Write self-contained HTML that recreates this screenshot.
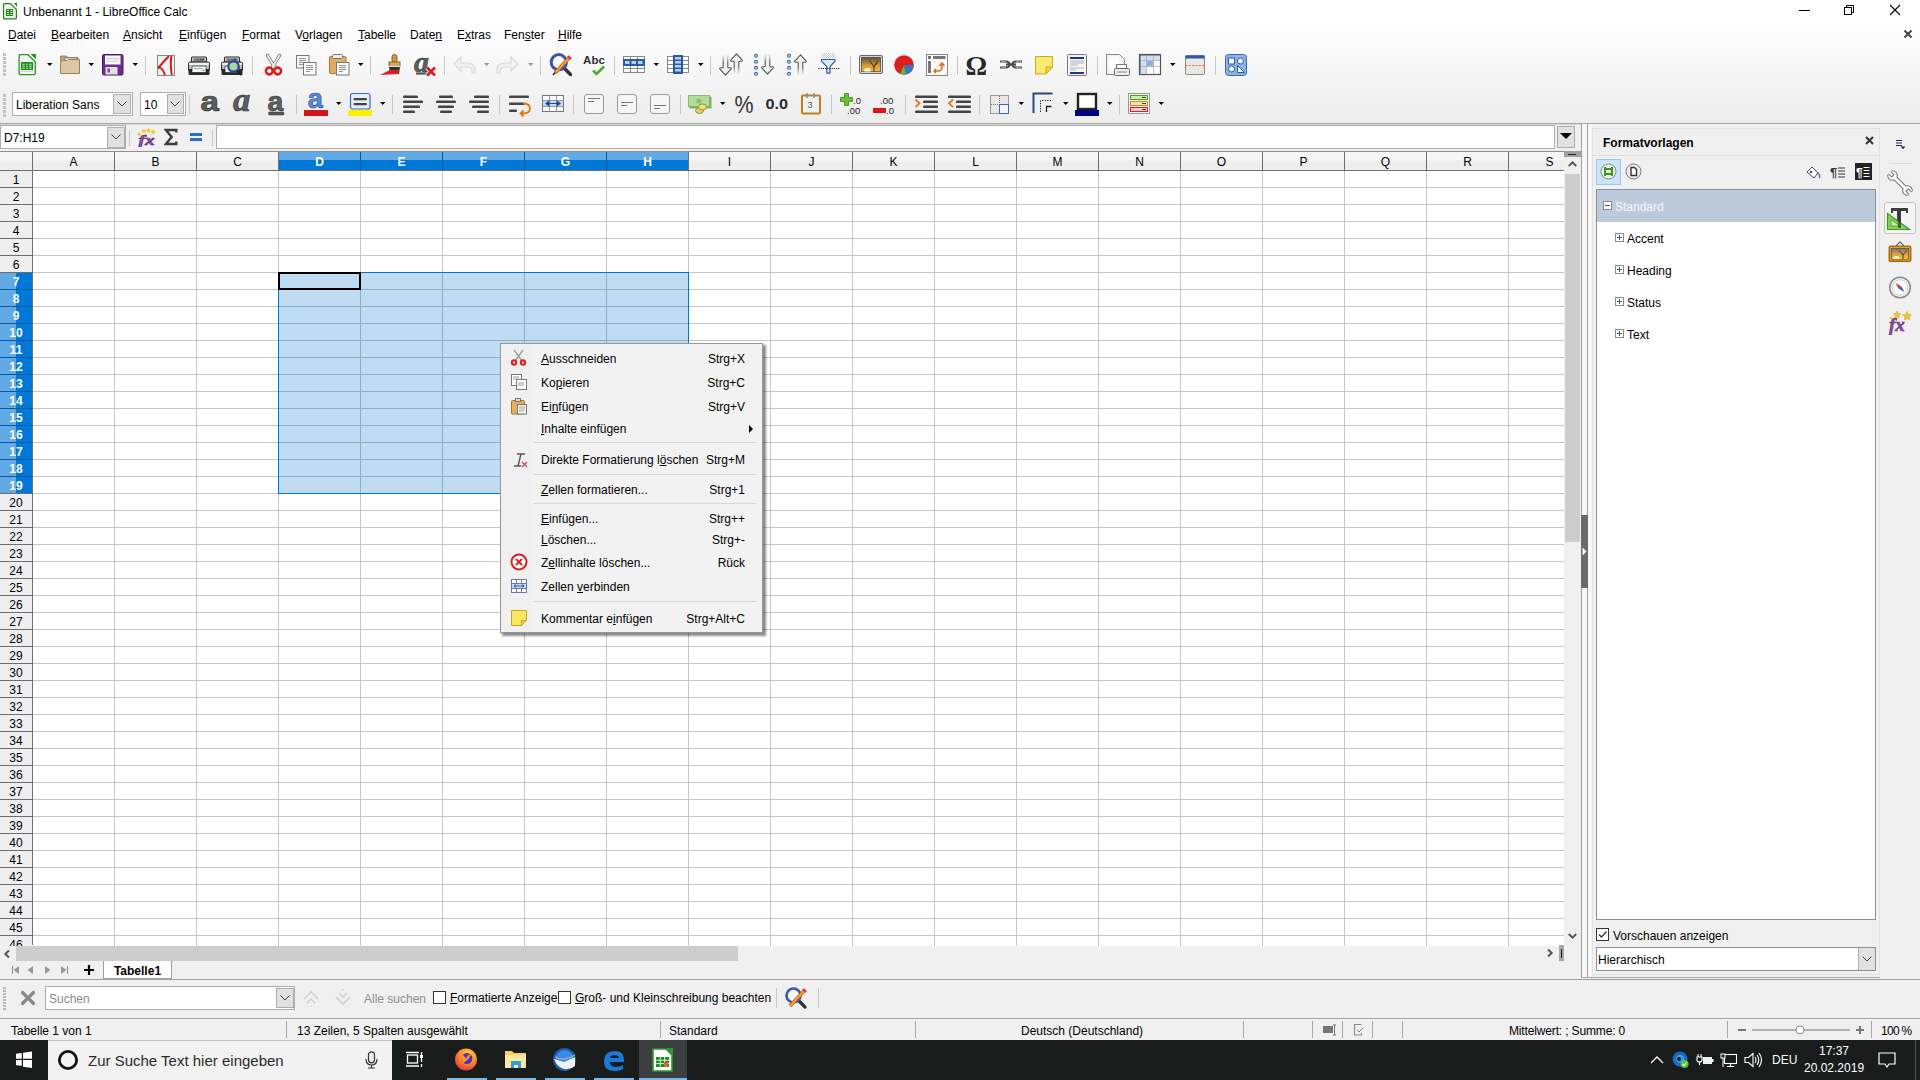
<!DOCTYPE html><html><head><meta charset="utf-8"><style>
html,body{margin:0;padding:0;}
body{width:1920px;height:1080px;overflow:hidden;position:relative;background:#f0f0f0;font-family:"Liberation Sans",sans-serif;color:#000;}
div{position:absolute;box-sizing:border-box;}
.t{white-space:nowrap;line-height:1;}
u{text-decoration:underline;text-underline-offset:1px;text-decoration-thickness:1px;}
</style></head><body>
<div style="left:0px;top:0px;width:1920px;height:23px;background:#fff"></div>
<div style="left:0px;top:23px;width:1920px;height:100px;background:linear-gradient(#fefefe,#ededed)"></div>
<div style="left:0px;top:123px;width:1920px;height:1px;background:#a9a9a9"></div>
<div style="left:0px;top:124px;width:1920px;height:1px;background:#d6d6d6"></div>
<svg style="position:absolute;left:0px;top:0px;" width="20" height="22" viewBox="0 0 20 22"><path d="M4.2 3.6h6.3l5.9 5.9v8.7l-.7.7h-11.5l-.7-.7v-13.9z" fill="#f2eef4" stroke="#1a8a10" stroke-width="1.2"/><path d="M14 3h3v4z" fill="#1a8a10"/><rect x="6" y="9" width="7" height="7" rx=".6" fill="#1a8a10"/><path d="M7 10.5h2M10.3 10.5h2M7 12.5h2M10.3 12.5h2M7 14.5h2M10.3 14.5h2" stroke="#e8f8e0" stroke-width=".9"/></svg>
<div class="t" style="left:23px;top:5.84px;font-size:12px;color:#000">Unbenannt 1 - LibreOffice Calc</div>
<div style="left:1799px;top:10px;width:11px;height:1px;background:#000"></div>
<svg style="position:absolute;left:1843px;top:4px;" width="12" height="12" viewBox="0 0 12 12"><rect x="1.5" y="3.5" width="7" height="7" fill="none" stroke="#000"/><path d="M3.5 3.5v-2h7v7h-2" fill="none" stroke="#000"/></svg>
<svg style="position:absolute;left:1889px;top:4px;" width="12" height="12" viewBox="0 0 12 12"><path d="M1 1L11 11M11 1L1 11" stroke="#000" stroke-width="1.1"/></svg>
<svg style="position:absolute;left:1903px;top:29px;" width="10" height="10" viewBox="0 0 10 10"><path d="M1.5 1.5L8.5 8.5M8.5 1.5L1.5 8.5" stroke="#444" stroke-width="2"/></svg>
<svg style="position:absolute;left:0;top:0" width="1920" height="125" viewBox="0 0 1920 125"><rect x="3" y="53" width="3" height="3" fill="#c3c3c3"/><rect x="3" y="57" width="3" height="3" fill="#c3c3c3"/><rect x="3" y="61" width="3" height="3" fill="#c3c3c3"/><rect x="3" y="65" width="3" height="3" fill="#c3c3c3"/><rect x="3" y="69" width="3" height="3" fill="#c3c3c3"/><rect x="3" y="73" width="3" height="3" fill="#c3c3c3"/><g transform="translate(18,54)"><path d="M1.6 .7h8.4l7.3 7.3v11.5l-1.2 1.2h-13.8l-1.2-1.2v-17.6z" fill="#f6f2f8" stroke="#259a1c" stroke-width="1.3"/><path d="M12.5 0h5.5v5.5z" fill="#259a1c"/><rect x="3" y="8" width="12" height="8" rx=".5" fill="#1a8a14"/><path d="M4.3 10.2h2.5M8 10.2h1.8M11 10.2h2.7M4.3 12.2h2.5M8 12.2h1.8M11 12.2h2.7M4.3 14.2h2.5M8 14.2h1.8M11 14.2h2.7" stroke="#e8f8e0" stroke-width=".9"/><path d="M3 17.5h12" stroke="#d0d0d0" stroke-width=".9"/></g><path d="M47 63h5.5l-2.75 3z" fill="#000"/><g transform="translate(60,55)"><path d="M0.5 3.5v-2.5h6l1.5 1.5h10v4h-17.5z" fill="#bfa37a" stroke="#9c8158"/><rect x="5" y="3" width="11.5" height="5" fill="#fff" stroke="#777" stroke-width=".8"/><path d="M0.5 18.5v-11l2-2h4.5l1-1h11.5v14z" fill="#dcc7a4" stroke="#9c8158"/></g><path d="M88.5 63h5.5l-2.75 3z" fill="#000"/><g transform="translate(102,54)"><rect x="0.5" y="0.5" width="20.5" height="20.5" rx="1.5" fill="#6e2c8c" stroke="#4a1a60"/><rect x="3" y="1.5" width="15.5" height="9" fill="#fafafa"/><path d="M4.5 4.5h12.5M4.5 7h12.5" stroke="#bbb" stroke-width=".8"/><rect x="3.5" y="13" width="12" height="7.5" fill="#e0e0e0"/><rect x="5.5" y="14.5" width="2.5" height="4" fill="#7a4a9a"/></g><path d="M132.5 63h5.5l-2.75 3z" fill="#000"/><rect x="145" y="56" width="1" height="19" fill="#c6c6c6"/><g transform="translate(157,55)"><rect x="0.5" y="0.5" width="17" height="20" fill="#f2f2f2" stroke="#888"/><path d="M12 1C7 6 4 10 1 13M1 13C4 12 6 14 8 20M14.5 1C13 8 14 15 14.8 20" fill="none" stroke="#d01c24" stroke-width="2"/></g><g transform="translate(188,57)"><path d="M3.5 1q0-1 1-1h13q1 0 1 1v4h-15z" fill="#d8d8d8" stroke="#2a2a2a" stroke-width="1.1"/><rect x="5.5" y="1.5" width="11" height="2.2" fill="#4a4a4a"/><path d="M6.5 2.6h1M8.5 2.6h1M10.5 2.6h1" stroke="#ccc" stroke-width=".8"/><path d="M0.6 7q0-2 2-2h16.8q2 0 2 2v6h-20.8z" fill="#c8c8c8" stroke="#2a2a2a" stroke-width="1.1"/><rect x="1" y="6" width="20" height="2" fill="#f0f0f0"/><rect x="0.5" y="12" width="21" height="6" rx="1" fill="#2a2a2a"/><rect x="4" y="9" width="14" height="6.5" fill="#f8f8f8" stroke="#222" stroke-width=".7"/><path d="M6 11l3 1.2l3-1.2l3 1.2" stroke="#7cba6a" fill="none"/><rect x="14.5" y="13" width="2" height="1" fill="#3a8ae0"/></g><g transform="translate(221,57)"><path d="M3.5 1q0-1 1-1h13q1 0 1 1v4h-15z" fill="#d8d8d8" stroke="#2a2a2a" stroke-width="1.1"/><rect x="5.5" y="1.5" width="11" height="2.2" fill="#4a4a4a"/><path d="M6.5 2.6h1M8.5 2.6h1M10.5 2.6h1" stroke="#ccc" stroke-width=".8"/><path d="M0.6 7q0-2 2-2h16.8q2 0 2 2v6h-20.8z" fill="#c8c8c8" stroke="#2a2a2a" stroke-width="1.1"/><rect x="1" y="6" width="20" height="2" fill="#f0f0f0"/><rect x="0.5" y="12" width="21" height="6" rx="1" fill="#2a2a2a"/><rect x="4" y="9" width="14" height="6.5" fill="#f8f8f8" stroke="#222" stroke-width=".7"/><circle cx="12.5" cy="9.5" r="5.2" fill="#a8d898" stroke="#2a44a8" stroke-width="2.2"/><path d="M16 13.5l4.5 4.5" stroke="#222" stroke-width="2.4"/></g><rect x="252" y="56" width="1" height="19" fill="#c6c6c6"/><g transform="translate(265,54)"><path d="M2.5 1.5L10 14M14.5 1.5L7 14" stroke="#6a6a6a" stroke-width="3.4" stroke-linecap="round"/><path d="M2.5 1.5L10 14M14.5 1.5L7 14" stroke="#f2f2f2" stroke-width="1.8" stroke-linecap="round"/><circle cx="4.3" cy="17" r="3.4" fill="#fff" stroke="#d81e1e" stroke-width="2.6"/><circle cx="12.7" cy="17" r="3.4" fill="#fff" stroke="#d81e1e" stroke-width="2.6"/></g><g transform="translate(296,55)"><rect x="0.5" y="0.5" width="12.5" height="12.5" fill="#fafafa" stroke="#777"/><path d="M3 3.5h7M3 5.5h7M3 7.5h7M3 9.5h4" stroke="#888" stroke-width=".9"/><rect x="7.5" y="7.5" width="12.5" height="12.5" fill="#fafafa" stroke="#777"/><path d="M10 10.5h7M10 12.5h7M10 14.5h7M10 16.5h4" stroke="#888" stroke-width=".9"/></g><g transform="translate(329,54)"><rect x="0.5" y="2.5" width="16.5" height="17" rx="1.5" fill="#e2ad62" stroke="#a8762a"/><rect x="3.5" y="0.5" width="10" height="4" rx="1" fill="#eee" stroke="#777"/><rect x="7.5" y="8.5" width="12.5" height="12.5" fill="#fafafa" stroke="#777"/><path d="M10 11.5h7M10 13.5h7M10 15.5h7M10 17.5h4" stroke="#888" stroke-width=".9"/></g><path d="M358 63h5.5l-2.75 3z" fill="#000"/><rect x="370" y="56" width="1" height="19" fill="#c6c6c6"/><g transform="translate(380,54)"><rect x="12" y="0.5" width="5" height="8" rx="2.5" fill="#c99a50" stroke="#8a6020"/><rect x="9" y="8" width="11" height="4" fill="#d9a858" stroke="#8a6020"/><rect x="9" y="11.5" width="11" height="1.5" fill="#ddd"/><path d="M9 13h11l-1 7h-9z" fill="#333"/><path d="M0 21l10-5h9l-1 4z" fill="#e02020"/></g><g transform="translate(415,56)"><text x="-1" y="15.5" font-family="Liberation Serif" font-style="italic" font-weight="bold" font-size="30" fill="#5a5f5f" stroke="#2e3232" stroke-width=".5">a</text><path d="M1 17.5h12" stroke="#505656" stroke-width="2.2"/><path d="M12 11.5l8 8M20 11.5l-8 8" stroke="#fff" stroke-width="4.5"/><path d="M12 11.5l8 8M20 11.5l-8 8" stroke="#e01818" stroke-width="2.6"/></g><rect x="444" y="56" width="1" height="19" fill="#c6c6c6"/><g transform="translate(453,56)"><path d="M8 1L1 8L8 15v-4h6q5 0 5 4v2h3v-3q0-7-8-7h-6z" fill="#f2f2f2" stroke="#dadada" stroke-width="1.2"/></g><path d="M484 63h5.5l-2.75 3z" fill="#999"/><g transform="translate(497,56)"><path d="M14 1L21 8L14 15v-4h-6q-5 0-5 4v2h-3v-3q0-7 8-7h6z" fill="#f2f2f2" stroke="#dadada" stroke-width="1.2"/></g><path d="M528 63h5.5l-2.75 3z" fill="#999"/><rect x="540" y="56" width="1" height="19" fill="#c6c6c6"/><g transform="translate(550,53)"><path d="M14 15l6.5 6.5" stroke="#333" stroke-width="3.4" stroke-linecap="round"/><circle cx="8.8" cy="9.2" r="7.6" fill="#fff" fill-opacity=".6" stroke="#3a54b0" stroke-width="3"/><path d="M5 20L19 5" stroke="#c06010" stroke-width="3.6"/><path d="M5 20L19 5" stroke="#f0a040" stroke-width="2"/><path d="M18 3l3 3" stroke="#e03030" stroke-width="2.4"/><path d="M3 22l2-2.5" stroke="#222" stroke-width="1.5"/></g><g transform="translate(583,55)"><text x="0" y="9" font-family="Liberation Sans" font-weight="bold" font-size="11.5" fill="#2e3436" textLength="22">Abc</text><path d="M10 15.5l3.5 3.5l7.5-7.5" fill="none" stroke="#4aae24" stroke-width="2.6"/></g><rect x="614" y="56" width="1" height="19" fill="#c6c6c6"/><g transform="translate(623,56)"><rect x="0.5" y="0.5" width="21" height="16" fill="#fff" stroke="#888"/><path d="M0.5 4.5h21M0.5 12.5h21M0.5 8.5h21M7.5 .5v16M14.5 .5v16" stroke="#888"/><rect x="0" y="3" width="22" height="7" fill="#2a5aa8"/><rect x="2" y="5" width="4.5" height="3" fill="#b8cff0"/><rect x="8.5" y="5" width="4.5" height="3" fill="#b8cff0"/><rect x="15" y="5" width="4.5" height="3" fill="#b8cff0"/></g><path d="M653.5 63h5.5l-2.75 3z" fill="#000"/><g transform="translate(667,55)"><rect x="0.5" y="1.5" width="21" height="16" fill="#fff" stroke="#888"/><path d="M0.5 5.5h21M0.5 9.5h21M0.5 13.5h21M7.5 1.5v16M14.5 1.5v16" stroke="#888"/><rect x="6" y="0" width="10" height="19" fill="#2a5aa8"/><rect x="8" y="2" width="6" height="2.5" fill="#b8cff0"/><rect x="8" y="6" width="6" height="2.5" fill="#b8cff0"/><rect x="8" y="10" width="6" height="2.5" fill="#b8cff0"/><rect x="8" y="14" width="6" height="2.5" fill="#b8cff0"/></g><path d="M698 63h5.5l-2.75 3z" fill="#000"/><rect x="710" y="56" width="1" height="19" fill="#c6c6c6"/><defs><linearGradient id="shd" x1="0" y1="0" x2="0" y2="1"><stop offset="0" stop-color="#666" stop-opacity="0"/><stop offset=".6" stop-color="#555"/></linearGradient><linearGradient id="shu" x1="0" y1="1" x2="0" y2="0"><stop offset="0" stop-color="#666" stop-opacity="0"/><stop offset=".6" stop-color="#555"/></linearGradient></defs><g transform="translate(719,55)"><rect x="4.2" y="0" width="4.6" height="14" fill="#f2f2f0"/><path d="M4.2 0v13M8.8 0v13" stroke="url(#shd)" stroke-width="1.1"/><path d="M4.2 12.8h-2.6q-1.6 0-.6 1.3l5.5 6.1l5.5-6.1q1-1.3-.6-1.3h-2.6" fill="#efefed" stroke="#555" stroke-width="1.1" stroke-linejoin="round"/></g><g transform="translate(730,54)"><rect x="4.2" y="6" width="4.6" height="14" fill="#f2f2f0"/><path d="M4.2 7v13M8.8 7v13" stroke="url(#shu)" stroke-width="1.1"/><path d="M4.2 7.2h-2.6q-1.6 0-.6-1.3l5.5-6.1l5.5 6.1q1 1.3-.6 1.3h-2.6" fill="#efefed" stroke="#555" stroke-width="1.1" stroke-linejoin="round"/></g><g transform="translate(754,54)"><circle cx="2" cy="1.8" r="1.45" fill="none" stroke="#3a6ab8" stroke-width="1.2"/><circle cx="2" cy="7.8" r="1.45" fill="none" stroke="#3a6ab8" stroke-width="1.2"/><circle cx="2" cy="13.8" r="1.45" fill="none" stroke="#3a6ab8" stroke-width="1.2"/><circle cx="2" cy="19.8" r="1.45" fill="none" stroke="#3a6ab8" stroke-width="1.2"/></g><g transform="translate(761,54)"><rect x="4.2" y="0" width="4.6" height="14" fill="#f2f2f0"/><path d="M4.2 0v13M8.8 0v13" stroke="url(#shd)" stroke-width="1.1"/><path d="M4.2 12.8h-2.6q-1.6 0-.6 1.3l5.5 6.1l5.5-6.1q1-1.3-.6-1.3h-2.6" fill="#efefed" stroke="#555" stroke-width="1.1" stroke-linejoin="round"/></g><g transform="translate(787,54)"><circle cx="2" cy="1.8" r="1.45" fill="none" stroke="#3a6ab8" stroke-width="1.2"/><circle cx="2" cy="7.8" r="1.45" fill="none" stroke="#3a6ab8" stroke-width="1.2"/><circle cx="2" cy="13.8" r="1.45" fill="none" stroke="#3a6ab8" stroke-width="1.2"/><circle cx="2" cy="19.8" r="1.45" fill="none" stroke="#3a6ab8" stroke-width="1.2"/></g><g transform="translate(794,55)"><rect x="4.2" y="6" width="4.6" height="14" fill="#f2f2f0"/><path d="M4.2 7v13M8.8 7v13" stroke="url(#shu)" stroke-width="1.1"/><path d="M4.2 7.2h-2.6q-1.6 0-.6-1.3l5.5-6.1l5.5 6.1q1 1.3-.6 1.3h-2.6" fill="#efefed" stroke="#555" stroke-width="1.1" stroke-linejoin="round"/></g><defs><pattern id="dith" width="2" height="2" patternUnits="userSpaceOnUse"><rect width="1" height="1" fill="#b8b8b8"/><rect x="1" y="1" width="1" height="1" fill="#c8c8c8"/></pattern></defs><g transform="translate(818,53)"><rect x="4" y="0" width="13" height="5.5" fill="url(#dith)" opacity=".8"/><path d="M3.5 6.5h13.5v1.6l-5 5.5v6.5h-3.2v-6.5l-5.3-5.5z" fill="#dfe9f6" stroke="#2a5aa8" stroke-width="1.2" stroke-linejoin="round"/><path d="M0.5 15.5h22" stroke="#111" stroke-dasharray="1.1 1.1"/></g><rect x="850" y="56" width="1" height="19" fill="#c6c6c6"/><defs><linearGradient id="sun" x1="0" y1="0" x2="0" y2="1"><stop offset="0" stop-color="#5a5448"/><stop offset=".55" stop-color="#d8962e"/><stop offset="1" stop-color="#f4b848"/></linearGradient></defs><defs><clipPath id="imgclip"><rect x="2.5" y="2.5" width="19" height="14"/></clipPath></defs><g transform="translate(859,55)"><rect x="0.6" y="0.6" width="22.8" height="17.8" rx="1.5" fill="#fafafa" stroke="#6a6a6a" stroke-width="1.2"/><rect x="2" y="2" width="20" height="15" fill="#555"/><g clip-path="url(#imgclip)"><rect x="2.5" y="2.5" width="19" height="14" fill="url(#sun)"/><circle cx="8.5" cy="16" r="3.2" fill="#fff8c0"/><path d="M15 17v-5l-3-4.5M15 12l2.5-4.5l1.5-2M12 7.5l-2-2M15.5 10l3-1.5" stroke="#2a2016" fill="none" stroke-width=".9"/></g></g><g transform="translate(894,55)"><circle cx="10" cy="10" r="9.8" fill="#e01c1c"/><path d="M10 10h9.8a9.8 9.8 0 0 1-8 9.6z" fill="#3a74c0"/><path d="M10 10l1.8 9.6a9.8 9.8 0 0 1-5.8-.8z" fill="#5ab83a"/></g><g transform="translate(926,54)"><rect x="0.5" y="0.5" width="21" height="21" fill="#fafafa" stroke="#888"/><rect x="2" y="2" width="3" height="3" fill="#777"/><rect x="7" y="2" width="12.5" height="3" fill="#777"/><rect x="2" y="7" width="3" height="12" fill="#777"/><path d="M8 17h4q4 0 4-4v-3M13.5 12l2.5-3l2.5 3M10 15l-2 2l2 2" fill="none" stroke="#e07010" stroke-width="1.6"/></g><rect x="957" y="56" width="1" height="19" fill="#c6c6c6"/><text x="965.5" y="75" font-family="Liberation Serif" font-weight="bold" font-size="27" fill="#262a2a">Ω</text><g transform="translate(1000,59)"><path d="M0 2.5h6q3 0 4 3q-1 3-4 3h-6" fill="none" stroke="#4a4a4a" stroke-width="2"/><path d="M22 2.5h-6q-3 0-4 3q1 3 4 3h6" fill="none" stroke="#4a4a4a" stroke-width="2"/><path d="M6 5.5h10" stroke="#4a4a4a" stroke-width="2.2"/><path d="M1 2.5h5M16 2.5h5M1 8.5h5M16 8.5h5" stroke="#aaa" stroke-width=".7"/></g><g transform="translate(1035,56)"><path d="M0.5 0.5h17v11l-6.5 6.5h-10.5z" fill="#f8ec70" stroke="#c8a818"/><path d="M11 17.5v-6.5h6.5" fill="#e8d848" stroke="#c8a818"/></g><g transform="translate(1067,54)"><rect x="0.5" y="0.5" width="19" height="21" rx="1" fill="#f6f6f6" stroke="#777"/><rect x="3" y="3" width="14" height="2" fill="#1a3a8a"/><path d="M3 7h14M3 9h14M3 11h8M3 14h14M3 16h6" stroke="#aaa" stroke-width=".9"/><rect x="3" y="18" width="14" height="2" fill="#1a3a8a"/></g><rect x="1097" y="56" width="1" height="19" fill="#c6c6c6"/><g transform="translate(1106,54)"><path d="M0.5 0.5h13l5 5v15h-18z" fill="#f4f4f4" stroke="#888"/><rect x="3" y="3" width="10" height="13" fill="#fff"/><rect x="10.5" y="10.5" width="10" height="4" fill="#fff" stroke="#777"/><rect x="8.5" y="14.5" width="15" height="7" rx="1" fill="#eee" stroke="#666"/><path d="M11 18h10" stroke="#888"/></g><g transform="translate(1139,54)"><rect x="0.5" y="0.5" width="21" height="20" fill="#fff" stroke="#555" stroke-width="1.2"/><path d="M1 1h20v5h-20zM1 6h6v14h-6z" fill="#cfe0f4"/><path d="M7.5 1v19M14.5 1v19M1 6.5h20M1 12.5h20" stroke="#aab" stroke-width=".8"/><rect x="8" y="7" width="6" height="5" fill="#8ab0e0"/><path d="M1 1h20M1 1v19" stroke="#555"/></g><path d="M1170 63h5.5l-2.75 3z" fill="#000"/><g transform="translate(1185,55)"><rect x="0.5" y="0.5" width="19" height="19" rx="1.5" fill="#e8e8e6" stroke="#888"/><rect x="0.5" y="0.5" width="19" height="3" fill="#2a5aa8"/><path d="M0.5 10.5h19" stroke="#f07010" stroke-width="1.2" stroke-dasharray="2 1.3"/></g><rect x="1215" y="56" width="1" height="19" fill="#c6c6c6"/><g transform="translate(1225,54)"><rect x="0.5" y="0.5" width="21" height="21" rx="3" fill="#8ab4e6" stroke="#3a6ab8"/><rect x="3.5" y="4" width="6" height="6" fill="#fff" stroke="#2a5aa8"/><circle cx="15.5" cy="7" r="3" fill="#fff" stroke="#2a5aa8"/><circle cx="6.5" cy="15" r="3" fill="#fff" stroke="#2a5aa8"/><path d="M12.5 11.5v7h7z" fill="#fff" stroke="#2a5aa8"/></g><rect x="3" y="94" width="3" height="3" fill="#c3c3c3"/><rect x="3" y="98" width="3" height="3" fill="#c3c3c3"/><rect x="3" y="102" width="3" height="3" fill="#c3c3c3"/><rect x="3" y="106" width="3" height="3" fill="#c3c3c3"/><rect x="3" y="110" width="3" height="3" fill="#c3c3c3"/><rect x="3" y="114" width="3" height="3" fill="#c3c3c3"/><rect x="189" y="95" width="1" height="19" fill="#c6c6c6"/><text transform="translate(200.5,111) scale(1.18,1)" font-family="Liberation Sans" font-weight="bold" font-size="28" fill="#5a5f5f" stroke="#2e3232" stroke-width=".7">a</text><text transform="translate(233,111) scale(1.05,1)" font-family="Liberation Serif" font-style="italic" font-weight="bold" font-size="33" fill="#5a5f5f" stroke="#2e3232" stroke-width=".6">a</text><text transform="translate(267.5,110.5) scale(1.05,1)" font-family="Liberation Sans" font-weight="bold" font-size="27" fill="#5a5f5f" stroke="#2e3232" stroke-width=".6">a</text><rect x="268.5" y="112" width="15.5" height="3" rx="1.2" fill="#555" stroke="#333" stroke-width=".5"/><rect x="296" y="95" width="1" height="19" fill="#c6c6c6"/><text transform="translate(307.8,107.6) scale(1.0,1)" font-family="Liberation Sans" font-weight="bold" font-size="27" fill="#5a8ad6" stroke="#2a54a8" stroke-width=".7">a</text><rect x="304" y="110" width="24" height="6" fill="#d0181c"/><path d="M336 102h5.5l-2.75 3z" fill="#000"/><g transform="translate(350,93)"><rect x="0.5" y="0.5" width="19.5" height="15.5" rx="2" fill="#e6eef8" stroke="#3a6ab8" stroke-width="1.2"/><rect x="3.5" y="5" width="13.5" height="2.2" rx="1" fill="#444"/><rect x="3.5" y="10" width="13.5" height="2.2" rx="1" fill="#444"/></g><rect x="348" y="110" width="24" height="6" fill="#fff000"/><path d="M380 102h5.5l-2.75 3z" fill="#000"/><rect x="392" y="95" width="1" height="19" fill="#c6c6c6"/><rect x="403" y="95.5" width="15" height="2.6" rx="1.2" fill="#444"/><rect x="403" y="100.5" width="20" height="2.6" rx="1.2" fill="#444"/><rect x="403" y="105.5" width="17" height="2.6" rx="1.2" fill="#444"/><rect x="403" y="110.5" width="12" height="2.6" rx="1.2" fill="#444"/><rect x="439" y="95.5" width="14" height="2.6" rx="1.2" fill="#444"/><rect x="436" y="100.5" width="20" height="2.6" rx="1.2" fill="#444"/><rect x="438" y="105.5" width="16" height="2.6" rx="1.2" fill="#444"/><rect x="440" y="110.5" width="12" height="2.6" rx="1.2" fill="#444"/><rect x="474" y="95.5" width="15" height="2.6" rx="1.2" fill="#444"/><rect x="469" y="100.5" width="20" height="2.6" rx="1.2" fill="#444"/><rect x="472" y="105.5" width="17" height="2.6" rx="1.2" fill="#444"/><rect x="477" y="110.5" width="12" height="2.6" rx="1.2" fill="#444"/><rect x="499" y="95" width="1" height="19" fill="#c6c6c6"/><rect x="509" y="95.5" width="20" height="2.6" rx="1.2" fill="#444"/><rect x="509" y="102.5" width="16" height="2.6" rx="1.2" fill="#444"/><rect x="509" y="109.5" width="8" height="2.6" rx="1.2" fill="#444"/><path d="M523 103.5q7 0 7 5q0 5-7 5h-2M523.5 110.5l-3 3l3 3" fill="none" stroke="#e07818" stroke-width="1.8"/><g transform="translate(542,95)"><rect x="0.5" y="0.5" width="21" height="16" fill="#fff" stroke="#777"/><path d="M.5 5.5h21M.5 11.5h21M7.5 .5v5M14.5 .5v5M7.5 11.5v5M14.5 11.5v5" stroke="#999"/><rect x="1" y="6" width="20" height="5" fill="#c8daf2"/><path d="M4 8.5h14M4 8.5l3-2.2v4.4zM18 8.5l-3-2.2v4.4z" fill="#1a4a9a" stroke="#1a4a9a" stroke-width="1.2"/></g><rect x="573" y="95" width="1" height="19" fill="#c6c6c6"/><g transform="translate(584,94)"><rect x="0.5" y="0.5" width="19" height="19" rx="2.5" fill="#f6f6f6" stroke="#999"/><path d="M4 4.5h12M4 7.5h6" stroke="#777" stroke-width="1"/></g><g transform="translate(617,94)"><rect x="0.5" y="0.5" width="19" height="19" rx="2.5" fill="#f6f6f6" stroke="#999"/><path d="M4 8.5h12M4 11.5h6" stroke="#777" stroke-width="1"/></g><g transform="translate(650,94)"><rect x="0.5" y="0.5" width="19" height="19" rx="2.5" fill="#f6f6f6" stroke="#999"/><path d="M4 11.5h12M4 14.5h6" stroke="#777" stroke-width="1"/></g><rect x="680" y="95" width="1" height="19" fill="#c6c6c6"/><g transform="translate(688,95)"><rect x="2" y="2" width="21" height="11" fill="#8ac070" stroke="#6aa050" stroke-width=".8"/><rect x="0.5" y="0.5" width="21" height="11" fill="#b2dc98" stroke="#7ab060" stroke-width=".8"/><circle cx="11" cy="6" r="2.5" fill="#8ac070"/><ellipse cx="11.5" cy="15.5" rx="4" ry="3" fill="#e0d070" stroke="#a09020"/><ellipse cx="14.5" cy="12" rx="4" ry="3" fill="#f0e080" stroke="#a09020"/></g><path d="M720 102h5.5l-2.75 3z" fill="#000"/><text transform="translate(734.5,112.8) scale(1.02,1.15)" font-family="Liberation Sans" font-size="21" fill="#333">%</text><text transform="translate(765.5,108.8) scale(1.05,1)" font-family="Liberation Sans" font-weight="bold" font-size="15.5" fill="#2a2a2a">0.0</text><g transform="translate(801,93)"><rect x="1" y="2.5" width="18" height="18" rx="1" fill="#f0f0f0" stroke="#c08020" stroke-width="2"/><path d="M6 0v5M13 0v5" stroke="#888" stroke-width="1.4"/><text x="6.5" y="14.5" font-family="Liberation Sans" font-size="9" fill="#555">3</text></g><rect x="831" y="95" width="1" height="19" fill="#c6c6c6"/><g transform="translate(840,93)"><path d="M4.5 0.5h4v4h4v4h-4v4h-4v-4h-4v-4h4z" fill="#6ac030" stroke="#3a8a10" stroke-width=".8"/></g><text x="853" y="103.5" font-family="Liberation Sans" font-size="9.5" fill="#222">.0</text><text x="847" y="114" font-family="Liberation Sans" font-size="9.5" fill="#222">.00</text><text x="880" y="103.5" font-family="Liberation Sans" font-size="9.5" fill="#222">.00</text><rect x="873" y="108" width="13" height="5" rx=".5" fill="#d81818"/><text x="886" y="114" font-family="Liberation Sans" font-size="9.5" fill="#222">.0</text><rect x="905" y="95" width="1" height="19" fill="#c6c6c6"/><rect x="915" y="95.5" width="23" height="2.6" rx="1.2" fill="#444"/><rect x="923" y="100.5" width="15" height="2.6" rx="1.2" fill="#444"/><rect x="923" y="105.5" width="15" height="2.6" rx="1.2" fill="#444"/><rect x="915" y="110.5" width="23" height="2.6" rx="1.2" fill="#444"/><path d="M915.5 99.5l4 3.8l-4 3.8" fill="none" stroke="#e07818" stroke-width="1.8"/><rect x="948" y="95.5" width="23" height="2.6" rx="1.2" fill="#444"/><rect x="956" y="100.5" width="15" height="2.6" rx="1.2" fill="#444"/><rect x="956" y="105.5" width="15" height="2.6" rx="1.2" fill="#444"/><rect x="948" y="110.5" width="23" height="2.6" rx="1.2" fill="#444"/><path d="M953 99.5l-4 3.8l4 3.8" fill="none" stroke="#e07818" stroke-width="1.8"/><rect x="979" y="95" width="1" height="19" fill="#c6c6c6"/><g transform="translate(990,95)"><rect x="0.5" y="0.5" width="18" height="18" fill="#e8e8e6" stroke="#999"/><path d="M9.5 1v8M1 9.5h8" stroke="#777" stroke-dasharray="1 1"/><rect x="9.5" y="9.5" width="9" height="9" fill="#f4f4f4" stroke="#3a6ab8"/></g><path d="M1018.5 102h5.5l-2.75 3z" fill="#000"/><g transform="translate(1032,92)"><path d="M1.5 21v-19.5h19" fill="none" stroke="#2a4a7a" stroke-width="2"/><path d="M8.5 20v-11.5h12" fill="none" stroke="#222" stroke-dasharray="1.3 1.3"/><path d="M14.5 20v-5.5h5" fill="none" stroke="#222" stroke-width="1.3"/></g><path d="M1063 102h5.5l-2.75 3z" fill="#000"/><g transform="translate(1075,93)"><rect x="3" y="1" width="18" height="15" fill="#fff" stroke="#222" stroke-width="2.4"/></g><rect x="1075" y="110" width="24" height="6" fill="#000080"/><path d="M1107 102h5.5l-2.75 3z" fill="#000"/><rect x="1119" y="95" width="1" height="19" fill="#c6c6c6"/><g transform="translate(1128,93)"><rect x="0.5" y="0.5" width="21" height="20" fill="#f6f6f6" stroke="#999"/><rect x="2.5" y="2.5" width="17" height="4" fill="#c8f0b0" stroke="#4aa020"/><rect x="2.5" y="8.5" width="17" height="4" fill="#fce0b8" stroke="#e08020"/><rect x="2.5" y="14.5" width="17" height="4" fill="#f8c8c8" stroke="#e02020"/><path d="M14 4.5h4M14 10.5h4M14 16.5h4" stroke="#444" stroke-width="1.2"/></g><path d="M1158.5 102h5.5l-2.75 3z" fill="#000"/></svg>
<div style="left:12px;top:92px;width:121px;height:24px;background:#fff;border:1px solid #adadad"></div>
<div style="left:113px;top:94px;width:18px;height:20px;background:#e1e1e1;border:1px solid #adadad"></div>
<svg style="position:absolute;left:116px;top:100px;" width="12" height="8" viewBox="0 0 12 8"><path d="M1.5 1.5L6 6L10.5 1.5" fill="none" stroke="#444" stroke-width="1"/></svg>
<div class="t" style="left:16px;top:98.84px;font-size:12px;">Liberation Sans</div>
<div style="left:140px;top:92px;width:46px;height:24px;background:#fff;border:1px solid #adadad"></div>
<div style="left:167px;top:94px;width:17px;height:20px;background:#e1e1e1;border:1px solid #adadad"></div>
<svg style="position:absolute;left:169px;top:100px;" width="12" height="8" viewBox="0 0 12 8"><path d="M1.5 1.5L6 6L10.5 1.5" fill="none" stroke="#444" stroke-width="1"/></svg>
<div class="t" style="left:144px;top:98.84px;font-size:12px;">10</div>
<div class="t" style="left:8px;top:28.84px;font-size:12px;"><u>D</u>atei</div>
<div class="t" style="left:51px;top:28.84px;font-size:12px;"><u>B</u>earbeiten</div>
<div class="t" style="left:123px;top:28.84px;font-size:12px;"><u>A</u>nsicht</div>
<div class="t" style="left:179px;top:28.84px;font-size:12px;"><u>E</u>infügen</div>
<div class="t" style="left:242px;top:28.84px;font-size:12px;"><u>F</u>ormat</div>
<div class="t" style="left:295px;top:28.84px;font-size:12px;">V<u>o</u>rlagen</div>
<div class="t" style="left:358px;top:28.84px;font-size:12px;"><u>T</u>abelle</div>
<div class="t" style="left:410px;top:28.84px;font-size:12px;">Date<u>n</u></div>
<div class="t" style="left:457px;top:28.84px;font-size:12px;">E<u>x</u>tras</div>
<div class="t" style="left:504px;top:28.84px;font-size:12px;">Fen<u>s</u>ter</div>
<div class="t" style="left:558px;top:28.84px;font-size:12px;"><u>H</u>ilfe</div>
<div style="left:0px;top:125px;width:126px;height:24px;background:#fff;border:1px solid #adadad"></div>
<div style="left:107px;top:127px;width:18px;height:21px;background:#e1e1e1;border:1px solid #adadad"></div>
<svg style="position:absolute;left:110px;top:133px;" width="12" height="8" viewBox="0 0 12 8"><path d="M1.5 1.5L6 6L10.5 1.5" fill="none" stroke="#444" stroke-width="1"/></svg>
<div class="t" style="left:4px;top:131.84px;font-size:12px;">D7:H19</div>
<div style="left:129px;top:130px;width:1px;height:16px;background:#c8c8c8"></div>
<div style="left:212px;top:130px;width:1px;height:16px;background:#c8c8c8"></div>
<svg style="position:absolute;left:136px;top:127px;" width="20" height="20" viewBox="0 0 20 20"><text transform="translate(2.5,17.6) scale(1.2,0.88)" font-family="Liberation Serif" font-style="italic" font-weight="bold" font-size="16" fill="#9a5ab0" stroke="#5a2a70" stroke-width=".7">fx</text><path transform="translate(3.2,7.2) scale(2.4)" d="M0-1l.29.6l.66.09l-.48.46l.12.65l-.59-.31l-.59.31l.12-.65l-.48-.46l.66-.09z" fill="#f0c828"/><path transform="translate(8,4) scale(2.8)" d="M0-1l.29.6l.66.09l-.48.46l.12.65l-.59-.31l-.59.31l.12-.65l-.48-.46l.66-.09z" fill="#f0c828"/><path transform="translate(12.5,3.6) scale(2.8)" d="M0-1l.29.6l.66.09l-.48.46l.12.65l-.59-.31l-.59.31l.12-.65l-.48-.46l.66-.09z" fill="#f0c828"/><path transform="translate(17,5) scale(3)" d="M0-1l.29.6l.66.09l-.48.46l.12.65l-.59-.31l-.59.31l.12-.65l-.48-.46l.66-.09z" fill="#f0c828"/></svg>
<svg style="position:absolute;left:164px;top:128px;" width="15" height="19" viewBox="0 0 15 19"><path d="M12.3 4.5V2H2l5.6 7L2 16h10.3v-2.5" fill="none" stroke="#3a3e3e" stroke-width="2.4" stroke-linejoin="miter" stroke-miterlimit="3"/></svg>
<div style="left:190px;top:133px;width:12px;height:3px;background:#2c6fbf"></div>
<div style="left:190px;top:138px;width:12px;height:3px;background:#2c6fbf"></div>
<div style="left:216px;top:125px;width:1339px;height:24px;background:#fff;border:1px solid #adadad"></div>
<div style="left:1557px;top:126px;width:18px;height:22px;background:#e1e1e1;border:1px solid #adadad"></div>
<svg style="position:absolute;left:1559px;top:132px;" width="14" height="8" viewBox="0 0 14 8"><path d="M1 1h12L7 7z" fill="#000"/></svg>
<div style="left:0px;top:151px;width:1564px;height:794px;background:#fff"></div>
<div style="left:0px;top:152px;width:1564px;height:18px;background:linear-gradient(#f7f7f7,#f7f7f7 40%,#ececec 60%,#ececec)"></div>
<div style="left:0px;top:170px;width:32px;height:775px;background:#f0f0f0"></div>
<div style="left:0px;top:151px;width:1564px;height:1px;background:#a8a8a8"></div>
<div style="left:33px;top:171px;width:1531px;height:775px;background-color:#fff;background-image:linear-gradient(to right,#c6c6c6 1px,transparent 1px),linear-gradient(#c6c6c6 1px,transparent 1px);background-size:82px 17px;background-position:81px 16px"></div>
<div style="left:279px;top:273px;width:409px;height:220px;background-color:#bfdcf3;background-image:linear-gradient(to right,#8eadc8 1px,transparent 1px),linear-gradient(#8eadc8 1px,transparent 1px);background-size:82px 17px;background-position:81px 16px"></div>
<div style="left:278px;top:272px;width:411px;height:222px;border:1px solid #0078d7"></div>
<div style="left:278px;top:272px;width:83px;height:18px;border:2px solid #000"></div>
<div style="left:0px;top:152px;width:1564px;height:18px;background:linear-gradient(#f6f6f6 0,#f6f6f6 8px,#eeeeee 9px,#eeeeee)"></div>
<div style="left:32px;top:152px;width:656px;height:0px;"></div>
<div style="left:279px;top:152px;width:409px;height:18px;background:linear-gradient(#62aae5 0,#62aae5 8px,#0078d7 8px,#0078d7)"></div>
<div style="left:0px;top:151px;width:1564px;height:1px;background:#8f8f8f"></div>
<div style="left:0px;top:170px;width:1564px;height:1px;background:#6f6f6f"></div>
<div style="left:32px;top:152px;width:1px;height:18px;background:#6f6f6f"></div>
<div class="t" style="left:33px;top:155.84px;font-size:12px;width:81px;text-align:center;color:#000">A</div>
<div style="left:114px;top:152px;width:1px;height:18px;background:#6f6f6f"></div>
<div class="t" style="left:115px;top:155.84px;font-size:12px;width:81px;text-align:center;color:#000">B</div>
<div style="left:196px;top:152px;width:1px;height:18px;background:#6f6f6f"></div>
<div class="t" style="left:197px;top:155.84px;font-size:12px;width:81px;text-align:center;color:#000">C</div>
<div style="left:278px;top:152px;width:1px;height:18px;background:#6f6f6f"></div>
<div class="t" style="left:279px;top:155.84px;font-size:12px;width:81px;text-align:center;color:#fff;font-weight:bold">D</div>
<div style="left:360px;top:152px;width:1px;height:18px;background:#005a9e"></div>
<div class="t" style="left:361px;top:155.84px;font-size:12px;width:81px;text-align:center;color:#fff;font-weight:bold">E</div>
<div style="left:442px;top:152px;width:1px;height:18px;background:#005a9e"></div>
<div class="t" style="left:443px;top:155.84px;font-size:12px;width:81px;text-align:center;color:#fff;font-weight:bold">F</div>
<div style="left:524px;top:152px;width:1px;height:18px;background:#005a9e"></div>
<div class="t" style="left:525px;top:155.84px;font-size:12px;width:81px;text-align:center;color:#fff;font-weight:bold">G</div>
<div style="left:606px;top:152px;width:1px;height:18px;background:#005a9e"></div>
<div class="t" style="left:607px;top:155.84px;font-size:12px;width:81px;text-align:center;color:#fff;font-weight:bold">H</div>
<div style="left:688px;top:152px;width:1px;height:18px;background:#6f6f6f"></div>
<div class="t" style="left:689px;top:155.84px;font-size:12px;width:81px;text-align:center;color:#000">I</div>
<div style="left:770px;top:152px;width:1px;height:18px;background:#6f6f6f"></div>
<div class="t" style="left:771px;top:155.84px;font-size:12px;width:81px;text-align:center;color:#000">J</div>
<div style="left:852px;top:152px;width:1px;height:18px;background:#6f6f6f"></div>
<div class="t" style="left:853px;top:155.84px;font-size:12px;width:81px;text-align:center;color:#000">K</div>
<div style="left:934px;top:152px;width:1px;height:18px;background:#6f6f6f"></div>
<div class="t" style="left:935px;top:155.84px;font-size:12px;width:81px;text-align:center;color:#000">L</div>
<div style="left:1016px;top:152px;width:1px;height:18px;background:#6f6f6f"></div>
<div class="t" style="left:1017px;top:155.84px;font-size:12px;width:81px;text-align:center;color:#000">M</div>
<div style="left:1098px;top:152px;width:1px;height:18px;background:#6f6f6f"></div>
<div class="t" style="left:1099px;top:155.84px;font-size:12px;width:81px;text-align:center;color:#000">N</div>
<div style="left:1180px;top:152px;width:1px;height:18px;background:#6f6f6f"></div>
<div class="t" style="left:1181px;top:155.84px;font-size:12px;width:81px;text-align:center;color:#000">O</div>
<div style="left:1262px;top:152px;width:1px;height:18px;background:#6f6f6f"></div>
<div class="t" style="left:1263px;top:155.84px;font-size:12px;width:81px;text-align:center;color:#000">P</div>
<div style="left:1344px;top:152px;width:1px;height:18px;background:#6f6f6f"></div>
<div class="t" style="left:1345px;top:155.84px;font-size:12px;width:81px;text-align:center;color:#000">Q</div>
<div style="left:1426px;top:152px;width:1px;height:18px;background:#6f6f6f"></div>
<div class="t" style="left:1427px;top:155.84px;font-size:12px;width:81px;text-align:center;color:#000">R</div>
<div style="left:1508px;top:152px;width:1px;height:18px;background:#6f6f6f"></div>
<div class="t" style="left:1509px;top:155.84px;font-size:12px;width:81px;text-align:center;color:#000">S</div>
<div style="left:1564px;top:151px;width:1px;height:20px;background:#6f6f6f"></div>
<div style="left:0px;top:152px;width:32px;height:18px;background:linear-gradient(#f6f6f6 0,#f6f6f6 8px,#eeeeee 9px,#eeeeee)"></div>
<div style="left:32px;top:152px;width:1px;height:19px;background:#6f6f6f"></div>
<div style="left:0px;top:171px;width:32px;height:775px;background:#efefef"></div>
<div style="left:0px;top:273px;width:32px;height:220px;background:linear-gradient(to right,#62aae5 0,#62aae5 16px,#0078d7 16px,#0078d7)"></div>
<div style="left:32px;top:272px;width:1px;height:222px;background:#0064c0"></div>
<div style="left:32px;top:170px;width:1px;height:775px;background:#6f6f6f"></div>
<div style="left:0px;top:187px;width:32px;height:1px;background:#6f6f6f"></div>
<div class="t" style="left:0px;top:173.84px;font-size:12px;width:32px;text-align:center;color:#000">1</div>
<div style="left:0px;top:204px;width:32px;height:1px;background:#6f6f6f"></div>
<div class="t" style="left:0px;top:190.84px;font-size:12px;width:32px;text-align:center;color:#000">2</div>
<div style="left:0px;top:221px;width:32px;height:1px;background:#6f6f6f"></div>
<div class="t" style="left:0px;top:207.84px;font-size:12px;width:32px;text-align:center;color:#000">3</div>
<div style="left:0px;top:238px;width:32px;height:1px;background:#6f6f6f"></div>
<div class="t" style="left:0px;top:224.84px;font-size:12px;width:32px;text-align:center;color:#000">4</div>
<div style="left:0px;top:255px;width:32px;height:1px;background:#6f6f6f"></div>
<div class="t" style="left:0px;top:241.84px;font-size:12px;width:32px;text-align:center;color:#000">5</div>
<div style="left:0px;top:272px;width:32px;height:1px;background:#6f6f6f"></div>
<div class="t" style="left:0px;top:258.84px;font-size:12px;width:32px;text-align:center;color:#000">6</div>
<div style="left:0px;top:289px;width:32px;height:1px;background:#005a9e"></div>
<div class="t" style="left:0px;top:275.84px;font-size:12px;width:32px;text-align:center;color:#fff;font-weight:bold">7</div>
<div style="left:0px;top:306px;width:32px;height:1px;background:#005a9e"></div>
<div class="t" style="left:0px;top:292.84px;font-size:12px;width:32px;text-align:center;color:#fff;font-weight:bold">8</div>
<div style="left:0px;top:323px;width:32px;height:1px;background:#005a9e"></div>
<div class="t" style="left:0px;top:309.84px;font-size:12px;width:32px;text-align:center;color:#fff;font-weight:bold">9</div>
<div style="left:0px;top:340px;width:32px;height:1px;background:#005a9e"></div>
<div class="t" style="left:0px;top:326.84px;font-size:12px;width:32px;text-align:center;color:#fff;font-weight:bold">10</div>
<div style="left:0px;top:357px;width:32px;height:1px;background:#005a9e"></div>
<div class="t" style="left:0px;top:343.84px;font-size:12px;width:32px;text-align:center;color:#fff;font-weight:bold">11</div>
<div style="left:0px;top:374px;width:32px;height:1px;background:#005a9e"></div>
<div class="t" style="left:0px;top:360.84px;font-size:12px;width:32px;text-align:center;color:#fff;font-weight:bold">12</div>
<div style="left:0px;top:391px;width:32px;height:1px;background:#005a9e"></div>
<div class="t" style="left:0px;top:377.84px;font-size:12px;width:32px;text-align:center;color:#fff;font-weight:bold">13</div>
<div style="left:0px;top:408px;width:32px;height:1px;background:#005a9e"></div>
<div class="t" style="left:0px;top:394.84px;font-size:12px;width:32px;text-align:center;color:#fff;font-weight:bold">14</div>
<div style="left:0px;top:425px;width:32px;height:1px;background:#005a9e"></div>
<div class="t" style="left:0px;top:411.84px;font-size:12px;width:32px;text-align:center;color:#fff;font-weight:bold">15</div>
<div style="left:0px;top:442px;width:32px;height:1px;background:#005a9e"></div>
<div class="t" style="left:0px;top:428.84px;font-size:12px;width:32px;text-align:center;color:#fff;font-weight:bold">16</div>
<div style="left:0px;top:459px;width:32px;height:1px;background:#005a9e"></div>
<div class="t" style="left:0px;top:445.84px;font-size:12px;width:32px;text-align:center;color:#fff;font-weight:bold">17</div>
<div style="left:0px;top:476px;width:32px;height:1px;background:#005a9e"></div>
<div class="t" style="left:0px;top:462.84px;font-size:12px;width:32px;text-align:center;color:#fff;font-weight:bold">18</div>
<div style="left:0px;top:493px;width:32px;height:1px;background:#6f6f6f"></div>
<div class="t" style="left:0px;top:479.84px;font-size:12px;width:32px;text-align:center;color:#fff;font-weight:bold">19</div>
<div style="left:0px;top:510px;width:32px;height:1px;background:#6f6f6f"></div>
<div class="t" style="left:0px;top:496.84px;font-size:12px;width:32px;text-align:center;color:#000">20</div>
<div style="left:0px;top:527px;width:32px;height:1px;background:#6f6f6f"></div>
<div class="t" style="left:0px;top:513.84px;font-size:12px;width:32px;text-align:center;color:#000">21</div>
<div style="left:0px;top:544px;width:32px;height:1px;background:#6f6f6f"></div>
<div class="t" style="left:0px;top:530.84px;font-size:12px;width:32px;text-align:center;color:#000">22</div>
<div style="left:0px;top:561px;width:32px;height:1px;background:#6f6f6f"></div>
<div class="t" style="left:0px;top:547.84px;font-size:12px;width:32px;text-align:center;color:#000">23</div>
<div style="left:0px;top:578px;width:32px;height:1px;background:#6f6f6f"></div>
<div class="t" style="left:0px;top:564.84px;font-size:12px;width:32px;text-align:center;color:#000">24</div>
<div style="left:0px;top:595px;width:32px;height:1px;background:#6f6f6f"></div>
<div class="t" style="left:0px;top:581.84px;font-size:12px;width:32px;text-align:center;color:#000">25</div>
<div style="left:0px;top:612px;width:32px;height:1px;background:#6f6f6f"></div>
<div class="t" style="left:0px;top:598.84px;font-size:12px;width:32px;text-align:center;color:#000">26</div>
<div style="left:0px;top:629px;width:32px;height:1px;background:#6f6f6f"></div>
<div class="t" style="left:0px;top:615.84px;font-size:12px;width:32px;text-align:center;color:#000">27</div>
<div style="left:0px;top:646px;width:32px;height:1px;background:#6f6f6f"></div>
<div class="t" style="left:0px;top:632.84px;font-size:12px;width:32px;text-align:center;color:#000">28</div>
<div style="left:0px;top:663px;width:32px;height:1px;background:#6f6f6f"></div>
<div class="t" style="left:0px;top:649.84px;font-size:12px;width:32px;text-align:center;color:#000">29</div>
<div style="left:0px;top:680px;width:32px;height:1px;background:#6f6f6f"></div>
<div class="t" style="left:0px;top:666.84px;font-size:12px;width:32px;text-align:center;color:#000">30</div>
<div style="left:0px;top:697px;width:32px;height:1px;background:#6f6f6f"></div>
<div class="t" style="left:0px;top:683.84px;font-size:12px;width:32px;text-align:center;color:#000">31</div>
<div style="left:0px;top:714px;width:32px;height:1px;background:#6f6f6f"></div>
<div class="t" style="left:0px;top:700.84px;font-size:12px;width:32px;text-align:center;color:#000">32</div>
<div style="left:0px;top:731px;width:32px;height:1px;background:#6f6f6f"></div>
<div class="t" style="left:0px;top:717.84px;font-size:12px;width:32px;text-align:center;color:#000">33</div>
<div style="left:0px;top:748px;width:32px;height:1px;background:#6f6f6f"></div>
<div class="t" style="left:0px;top:734.84px;font-size:12px;width:32px;text-align:center;color:#000">34</div>
<div style="left:0px;top:765px;width:32px;height:1px;background:#6f6f6f"></div>
<div class="t" style="left:0px;top:751.84px;font-size:12px;width:32px;text-align:center;color:#000">35</div>
<div style="left:0px;top:782px;width:32px;height:1px;background:#6f6f6f"></div>
<div class="t" style="left:0px;top:768.84px;font-size:12px;width:32px;text-align:center;color:#000">36</div>
<div style="left:0px;top:799px;width:32px;height:1px;background:#6f6f6f"></div>
<div class="t" style="left:0px;top:785.84px;font-size:12px;width:32px;text-align:center;color:#000">37</div>
<div style="left:0px;top:816px;width:32px;height:1px;background:#6f6f6f"></div>
<div class="t" style="left:0px;top:802.84px;font-size:12px;width:32px;text-align:center;color:#000">38</div>
<div style="left:0px;top:833px;width:32px;height:1px;background:#6f6f6f"></div>
<div class="t" style="left:0px;top:819.84px;font-size:12px;width:32px;text-align:center;color:#000">39</div>
<div style="left:0px;top:850px;width:32px;height:1px;background:#6f6f6f"></div>
<div class="t" style="left:0px;top:836.84px;font-size:12px;width:32px;text-align:center;color:#000">40</div>
<div style="left:0px;top:867px;width:32px;height:1px;background:#6f6f6f"></div>
<div class="t" style="left:0px;top:853.84px;font-size:12px;width:32px;text-align:center;color:#000">41</div>
<div style="left:0px;top:884px;width:32px;height:1px;background:#6f6f6f"></div>
<div class="t" style="left:0px;top:870.84px;font-size:12px;width:32px;text-align:center;color:#000">42</div>
<div style="left:0px;top:901px;width:32px;height:1px;background:#6f6f6f"></div>
<div class="t" style="left:0px;top:887.84px;font-size:12px;width:32px;text-align:center;color:#000">43</div>
<div style="left:0px;top:918px;width:32px;height:1px;background:#6f6f6f"></div>
<div class="t" style="left:0px;top:904.84px;font-size:12px;width:32px;text-align:center;color:#000">44</div>
<div style="left:0px;top:935px;width:32px;height:1px;background:#6f6f6f"></div>
<div class="t" style="left:0px;top:921.84px;font-size:12px;width:32px;text-align:center;color:#000">45</div>
<div class="t" style="left:0px;top:938.84px;font-size:12px;width:32px;text-align:center;color:#000">46</div>
<div style="left:1564px;top:151px;width:17px;height:794px;background:#f0f0f0"></div>
<div style="left:1564px;top:151px;width:17px;height:6px;background:#a0a0a0"></div>
<div style="left:1568px;top:154px;width:8px;height:1px;background:#222"></div>
<svg style="position:absolute;left:1567px;top:160px;" width="11" height="8" viewBox="0 0 11 8"><path d="M1.8 6L5.5 2.3L9.2 6" fill="none" stroke="#555" stroke-width="2"/></svg>
<div style="left:1565px;top:174px;width:15px;height:368px;background:#cdcdcd"></div>
<svg style="position:absolute;left:1567px;top:932px;" width="11" height="8" viewBox="0 0 11 8"><path d="M1.8 2L5.5 5.7L9.2 2" fill="none" stroke="#555" stroke-width="2"/></svg>
<div style="left:0px;top:946px;width:1564px;height:15px;background:#f0f0f0"></div>
<svg style="position:absolute;left:3px;top:949px;" width="8" height="10" viewBox="0 0 8 10"><path d="M6 1.5L2.3 5L6 8.5" fill="none" stroke="#555" stroke-width="2"/></svg>
<div style="left:16px;top:946px;width:722px;height:15px;background:#cdcdcd"></div>
<svg style="position:absolute;left:1546px;top:948px;" width="8" height="10" viewBox="0 0 8 10"><path d="M2 1.5L5.7 5L2 8.5" fill="none" stroke="#555" stroke-width="2"/></svg>
<div style="left:1559px;top:945px;width:5px;height:17px;background:#a8a8a8"></div>
<div style="left:1561px;top:949px;width:1px;height:9px;background:#111"></div>
<div style="left:0px;top:961px;width:1581px;height:18px;background:#f0f0f0"></div>
<div style="left:0px;top:979px;width:1920px;height:1px;background:#a0a0a0"></div>
<svg style="position:absolute;left:10px;top:963px;" width="64" height="14" viewBox="0 0 64 14"><path d="M2.5 3v8" stroke="#999" stroke-width="1.2"/><path d="M9 3L3.5 7L9 11z" fill="#999"/><path d="M23 3L17.5 7L23 11z" fill="#999"/><path d="M35 3L40.5 7L35 11z" fill="#999"/><path d="M51 3L56.5 7L51 11z" fill="#999"/><path d="M57.5 3v8" stroke="#999" stroke-width="1.2"/></svg>
<svg style="position:absolute;left:83px;top:964px;" width="12" height="12" viewBox="0 0 12 12"><path d="M6 1v10M1 6h10" stroke="#000" stroke-width="2.2"/></svg>
<div style="left:103px;top:961px;width:69px;height:18px;background:#fff;border:1px solid #a0a0a0;border-top:none"></div>
<div class="t" style="left:103px;top:964.84px;font-size:12px;width:69px;text-align:center;font-weight:bold">Tabelle1</div>
<div style="left:0px;top:980px;width:1920px;height:39px;background:#f0f0f0"></div>
<div style="left:0px;top:1018px;width:1920px;height:1px;background:#a8a8a8"></div>
<div style="left:3px;top:987px;width:3px;height:2px;background:#b8b8b8"></div>
<div style="left:3px;top:990px;width:3px;height:2px;background:#b8b8b8"></div>
<div style="left:3px;top:993px;width:3px;height:2px;background:#b8b8b8"></div>
<div style="left:3px;top:996px;width:3px;height:2px;background:#b8b8b8"></div>
<div style="left:3px;top:999px;width:3px;height:2px;background:#b8b8b8"></div>
<div style="left:3px;top:1002px;width:3px;height:2px;background:#b8b8b8"></div>
<div style="left:3px;top:1005px;width:3px;height:2px;background:#b8b8b8"></div>
<div style="left:3px;top:1008px;width:3px;height:2px;background:#b8b8b8"></div>
<svg style="position:absolute;left:19px;top:989px;" width="18" height="18" viewBox="0 0 18 18"><path d="M3.5 3.5L14.5 14.5M14.5 3.5L3.5 14.5" stroke="#888" stroke-width="3.2" stroke-linecap="round"/></svg>
<div style="left:45px;top:986px;width:250px;height:24px;background:#fff;border:1px solid #adadad"></div>
<div style="left:276px;top:988px;width:18px;height:20px;background:#e1e1e1;border:1px solid #adadad"></div>
<svg style="position:absolute;left:279px;top:994px;" width="12" height="8" viewBox="0 0 12 8"><path d="M1.5 1.5L6 6L10.5 1.5" fill="none" stroke="#444" stroke-width="1"/></svg>
<div class="t" style="left:49px;top:992.84px;font-size:12px;color:#8a8a8a">Suchen</div>
<svg style="position:absolute;left:301px;top:987px;" width="20" height="22" viewBox="0 0 20 22"><path d="M3 12L10 5L17 12M6 16L10 12L14 16M10 19v1" fill="none" stroke="#cfcfcf" stroke-width="1.6"/></svg>
<svg style="position:absolute;left:333px;top:987px;" width="20" height="22" viewBox="0 0 20 22"><path d="M3 10L10 17L17 10M6 6L10 10L14 6M10 2v1" fill="none" stroke="#cfcfcf" stroke-width="1.6"/></svg>
<div class="t" style="left:364px;top:992.84px;font-size:12px;color:#8d8d8d">Alle suchen</div>
<div style="left:433px;top:991px;width:13px;height:13px;background:#fff;border:1px solid #333"></div>
<div class="t" style="left:450px;top:991.84px;font-size:12px;"><u>F</u>ormatierte Anzeige</div>
<div style="left:558px;top:991px;width:13px;height:13px;background:#fff;border:1px solid #333"></div>
<div class="t" style="left:575px;top:991.84px;font-size:12px;"><u>G</u>roß- und Kleinschreibung beachten</div>
<div style="left:776px;top:988px;width:1px;height:20px;background:#c8c8c8"></div>
<div style="left:818px;top:988px;width:1px;height:20px;background:#c8c8c8"></div>
<div style="left:0px;top:1019px;width:1920px;height:21px;background:#f0f0f0"></div>
<div class="t" style="left:11px;top:1024.84px;font-size:12px;">Tabelle 1 von 1</div>
<div style="left:286px;top:1021px;width:1px;height:17px;background:#a8a8a8"></div>
<div style="left:660px;top:1021px;width:1px;height:17px;background:#a8a8a8"></div>
<div style="left:915px;top:1021px;width:1px;height:17px;background:#a8a8a8"></div>
<div style="left:1243px;top:1021px;width:1px;height:17px;background:#a8a8a8"></div>
<div style="left:1312px;top:1021px;width:1px;height:17px;background:#a8a8a8"></div>
<div style="left:1342px;top:1021px;width:1px;height:17px;background:#a8a8a8"></div>
<div style="left:1372px;top:1021px;width:1px;height:17px;background:#a8a8a8"></div>
<div style="left:1402px;top:1021px;width:1px;height:17px;background:#a8a8a8"></div>
<div style="left:1727px;top:1021px;width:1px;height:17px;background:#a8a8a8"></div>
<div style="left:1871px;top:1021px;width:1px;height:17px;background:#a8a8a8"></div>
<div class="t" style="left:297px;top:1024.84px;font-size:12px;">13 Zeilen, 5 Spalten ausgewählt</div>
<div class="t" style="left:669px;top:1024.84px;font-size:12px;">Standard</div>
<div class="t" style="left:1021px;top:1024.84px;font-size:12px;">Deutsch (Deutschland)</div>
<div class="t" style="left:1509px;top:1024.84px;font-size:12px;letter-spacing:-0.15px">Mittelwert: ; Summe: 0</div>
<div style="left:1738px;top:1029px;width:8px;height:2px;background:#777"></div>
<div style="left:1752px;top:1029px;width:98px;height:2px;background:#b0b0b0"></div>
<svg style="position:absolute;left:1795px;top:1025px;" width="10" height="10" viewBox="0 0 10 10"><circle cx="5" cy="5" r="4" fill="#fff" stroke="#888"/></svg>
<svg style="position:absolute;left:1855px;top:1025px;" width="10" height="10" viewBox="0 0 10 10"><path d="M5 1v8M1 5h8" stroke="#777" stroke-width="2"/></svg>
<div class="t" style="left:1881px;top:1024.84px;font-size:12px;letter-spacing:-0.7px">100 %</div>
<div style="left:0px;top:1040px;width:1920px;height:40px;background:#181d1b"></div>
<div style="left:48px;top:1040px;width:344px;height:40px;background:#f2f2f2"></div>
<div style="left:1588px;top:124px;width:332px;height:855px;background:#f0f0f0"></div>
<div style="left:1582px;top:124px;width:5px;height:853px;background:#f7f7f7"></div>
<div style="left:1588px;top:124px;width:4px;height:853px;background:#f6f6f6"></div>
<div style="left:1581px;top:123px;width:1px;height:855px;background:#a0a0a0"></div>
<div style="left:1587px;top:123px;width:1px;height:855px;background:#a0a0a0"></div>
<div style="left:1581px;top:977px;width:339px;height:1px;background:#a8a8a8"></div>
<div style="left:1592px;top:128px;width:288px;height:847px;border:1px solid #e2e2e2"></div>
<div class="t" style="left:1603px;top:136.84px;font-size:12px;font-weight:bold">Formatvorlagen</div>
<svg style="position:absolute;left:1864px;top:135px;" width="11" height="11" viewBox="0 0 11 11"><path d="M2 2L9 9M9 2L2 9" stroke="#333" stroke-width="2"/></svg>
<div style="left:1593px;top:155px;width:286px;height:1px;background:#e0e0e0"></div>
<div style="left:1596px;top:159px;width:25px;height:26px;background:#cce4f7;border:1px solid #99c9ef"></div>
<svg style="position:absolute;left:1600px;top:163px;" width="17" height="17" viewBox="0 0 17 17"><circle cx="8.5" cy="8.5" r="7.5" fill="#eee" stroke="#888"/><path d="M5 4v9M12 4v9M4 6h9M4 11h9" stroke="#3a9a1a" stroke-width="2"/></svg>
<svg style="position:absolute;left:1625px;top:163px;" width="17" height="17" viewBox="0 0 17 17"><circle cx="8.5" cy="8.5" r="7.5" fill="#eee" stroke="#777"/><path d="M6 4.5h3.5l2 2V12.5h-5.5z" fill="#fff" stroke="#333" stroke-width="1.4"/></svg>
<svg style="position:absolute;left:1804px;top:163px;" width="18" height="18" viewBox="0 0 18 18"><path d="M3 9l5-5l6 6l-4 5z" fill="#fff" stroke="#444"/><path d="M14 10c2 2 2 4 1 5" fill="none" stroke="#4a7ac8" stroke-width="1.5"/><circle cx="7" cy="9" r="1.2" fill="#444"/></svg>
<svg style="position:absolute;left:1829px;top:163px;" width="18" height="18" viewBox="0 0 18 18"><text x="1" y="14" font-family="Liberation Sans" font-size="13" font-weight="bold" fill="#333">¶</text><path d="M9 5h7M9 8h7M9 11h7M9 14h7" stroke="#333" stroke-width="1.2"/></svg>
<div style="left:1855px;top:163px;width:17px;height:17px;background:#222"></div>
<svg style="position:absolute;left:1855px;top:163px;" width="17" height="17" viewBox="0 0 17 17"><text x="1" y="13.5" font-family="Liberation Sans" font-size="12" font-weight="bold" fill="#fff">¶</text><path d="M8.5 4.5h6M8.5 7.5h6M8.5 10.5h6M8.5 13.5h6" stroke="#fff" stroke-width="1.2"/></svg>
<div style="left:1596px;top:189px;width:280px;height:731px;background:#fff;border:1px solid #8a8f99"></div>
<div style="left:1597px;top:190px;width:278px;height:32px;background:#bccbdb"></div>
<div style="left:1603px;top:201px;width:9px;height:9px;background:#fff;border:1px solid #8a8a8a"></div>
<div style="left:1605px;top:205px;width:5px;height:1px;background:#555"></div>
<div class="t" style="left:1615px;top:200.84px;font-size:12px;color:#f4f7fa">Standard</div>
<div style="left:1615px;top:233px;width:9px;height:9px;background:#fff;border:1px solid #8a8a8a"></div>
<div style="left:1617px;top:237px;width:5px;height:1px;background:#3355aa"></div>
<div style="left:1619px;top:235px;width:1px;height:5px;background:#3355aa"></div>
<div class="t" style="left:1627px;top:232.84px;font-size:12px;">Accent</div>
<div style="left:1615px;top:265px;width:9px;height:9px;background:#fff;border:1px solid #8a8a8a"></div>
<div style="left:1617px;top:269px;width:5px;height:1px;background:#3355aa"></div>
<div style="left:1619px;top:267px;width:1px;height:5px;background:#3355aa"></div>
<div class="t" style="left:1627px;top:264.84px;font-size:12px;">Heading</div>
<div style="left:1615px;top:297px;width:9px;height:9px;background:#fff;border:1px solid #8a8a8a"></div>
<div style="left:1617px;top:301px;width:5px;height:1px;background:#3355aa"></div>
<div style="left:1619px;top:299px;width:1px;height:5px;background:#3355aa"></div>
<div class="t" style="left:1627px;top:296.84px;font-size:12px;">Status</div>
<div style="left:1615px;top:329px;width:9px;height:9px;background:#fff;border:1px solid #8a8a8a"></div>
<div style="left:1617px;top:333px;width:5px;height:1px;background:#3355aa"></div>
<div style="left:1619px;top:331px;width:1px;height:5px;background:#3355aa"></div>
<div class="t" style="left:1627px;top:328.84px;font-size:12px;">Text</div>
<div style="left:1596px;top:928px;width:13px;height:13px;background:#fff;border:1px solid #333"></div>
<svg style="position:absolute;left:1597px;top:929px;" width="11" height="11" viewBox="0 0 11 11"><path d="M2 5.5L4.5 8L9.5 2.5" fill="none" stroke="#333" stroke-width="1.3"/></svg>
<div class="t" style="left:1613px;top:929.84px;font-size:12px;">Vorschauen anzeigen</div>
<div style="left:1596px;top:947px;width:280px;height:24px;background:#fff;border:1px solid #8a8f99"></div>
<div style="left:1858px;top:948px;width:17px;height:22px;background:#e1e1e1;border-left:1px solid #adadad"></div>
<svg style="position:absolute;left:1861px;top:955px;" width="12" height="8" viewBox="0 0 12 8"><path d="M1.5 1.5L6 6L10.5 1.5" fill="none" stroke="#444" stroke-width="1"/></svg>
<div class="t" style="left:1598px;top:953.84px;font-size:12px;">Hierarchisch</div>
<div style="left:1581px;top:515px;width:7px;height:73px;background:#6a6a6a"></div>
<svg style="position:absolute;left:1582px;top:547px;" width="5" height="9" viewBox="0 0 5 9"><path d="M0.5 0.5L4.5 4.5L0.5 8.5z" fill="#fff"/></svg>
<div style="left:1880px;top:124px;width:40px;height:855px;background:#f0f0f0"></div>
<svg style="position:absolute;left:1895px;top:139px;" width="12" height="11" viewBox="0 0 12 11"><path d="M1 1.5h6M1 4h6M1 6.5h6" stroke="#1a2a5a" stroke-width="1.1"/><path d="M5.5 7.5h5l-2.5 2.5z" fill="#0a1a3a"/></svg>
<div style="left:1889px;top:163px;width:23px;height:1px;background:#dcdcdc"></div>
<svg style="position:absolute;left:1887px;top:170px;" width="26" height="26" viewBox="0 0 26 26"><line x1="6" y1="6" x2="19.5" y2="19.5" stroke="#7a7a7a" stroke-width="4.8" stroke-linecap="round"/><circle cx="5.5" cy="5.5" r="4.8" fill="#fff" stroke="#7a7a7a" stroke-width="1.1"/><circle cx="20.5" cy="20.5" r="4.8" fill="#fff" stroke="#7a7a7a" stroke-width="1.1"/><line x1="6" y1="6" x2="19.5" y2="19.5" stroke="#fff" stroke-width="2.6"/><rect x="-1.7" y="-7" width="3.4" height="7.5" fill="#f0f0f0" stroke="#7a7a7a" stroke-width="1" transform="translate(5.5,5.5) rotate(-45)"/><rect x="-1.7" y="-0.5" width="3.4" height="7.5" fill="#f0f0f0" stroke="#7a7a7a" stroke-width="1" transform="translate(20.5,20.5) rotate(-45)"/><rect x="-3" y="-8" width="6" height="4" fill="#f0f0f0" transform="translate(5.5,5.5) rotate(-45)"/><rect x="-3" y="4" width="6" height="4" fill="#f0f0f0" transform="translate(20.5,20.5) rotate(-45)"/></svg>
<div style="left:1884px;top:202px;width:32px;height:32px;background:#f5f5f5;border:1px solid #c4c4c4;border-radius:3px"></div>
<svg style="position:absolute;left:1886px;top:205px;" width="28" height="27" viewBox="0 0 28 27"><path d="M5 3h17v5h-2v-2h-5v18h-4V6h-4v2h-2z" fill="#3a3e3e"/><path d="M1.5 8.5L23.5 24.5H1.5z" fill="#8ad060" stroke="#3a9a20" stroke-width="1.2"/><path d="M5 14.5L14 21H5z" fill="#c8ecb0" stroke="#3a9a20" stroke-width=".8"/><path d="M12 4h3v19h-3z" fill="#3a3e3e" opacity=".75"/></svg>
<svg style="position:absolute;left:1887px;top:240px;" width="26" height="23" viewBox="0 0 26 23"><defs><clipPath id="gclip"><rect x="4.5" y="8.5" width="17" height="10.5"/></clipPath><linearGradient id="sg2" x1="0" y1="0" x2="0" y2="1"><stop offset="0" stop-color="#6a7c9c"/><stop offset=".5" stop-color="#d89a40"/><stop offset="1" stop-color="#f8c050"/></linearGradient></defs><path d="M9 6L13 1.8L17 6" fill="none" stroke="#666" stroke-width="1.1"/><rect x="2.2" y="6.2" width="21.6" height="15.2" rx="1.5" fill="#e0a030" stroke="#9a6410" stroke-width="1.3"/><rect x="4" y="8" width="18" height="11.5" fill="#7a5010"/><g clip-path="url(#gclip)"><rect x="4.5" y="8.5" width="17" height="10.5" fill="url(#sg2)"/><circle cx="9.5" cy="19" r="3" fill="#fff4b8"/><path d="M16 19v-4l-2.5-3M16 15l2.5-3M13.5 12l-1.5-1.5M18.5 12l1-1.5" stroke="#222" stroke-width=".8" fill="none"/></g></svg>
<svg style="position:absolute;left:1888px;top:276px;" width="24" height="24" viewBox="0 0 24 24"><circle cx="12" cy="11.5" r="10.3" fill="#f8f8f8" stroke="#8a8a8a" stroke-width="1.6"/><circle cx="12" cy="11.5" r="7.8" fill="#fff" stroke="#c8c8c8" stroke-width="1"/><path d="M7.5 7L13.2 10.3L10.7 12.8z" fill="#e02828"/><path d="M16.5 16L10.8 12.7L13.3 10.2z" fill="#3a5ac8"/></svg>
<svg style="position:absolute;left:1886px;top:309px;" width="28" height="26" viewBox="0 0 28 26"><text x="3" y="22" font-family="Liberation Serif" font-style="italic" font-weight="bold" font-size="19" fill="#8a4aa0" stroke="#5a2a70" stroke-width=".5">fx</text><path d="M4 8l1 1.2l-1.3.6z" fill="#e8c030"/><circle cx="5" cy="9" r="1.3" fill="#f0c828"/><path d="M11 2l1.2 2.4l2.6.3l-1.9 1.8l.5 2.6l-2.4-1.3l-2.4 1.3l.5-2.6l-1.9-1.8l2.6-.3z" fill="#f0c828" stroke="#c8a010" stroke-width=".5"/><path d="M21 2.5l1.4 2.8l3 .4l-2.2 2.1l.6 3l-2.8-1.5l-2.8 1.5l.6-3l-2.2-2.1l3-.4z" fill="#f0c828" stroke="#c8a010" stroke-width=".5"/></svg>
<div style="left:502px;top:345px;width:264px;height:291px;background:rgba(0,0,0,0.45);filter:blur(1.2px)"></div>
<div style="left:500px;top:343px;width:263px;height:290px;background:#f2f2f2;border:1px solid #979797"></div>
<div style="left:501px;top:344px;width:32px;height:288px;background:#f0f0f0"></div>
<div class="t" style="left:541px;top:352.84px;font-size:12px;"><u>A</u>usschneiden</div>
<div class="t" style="left:645px;top:352.84px;font-size:12px;width:100px;text-align:right;">Strg+X</div>
<div class="t" style="left:541px;top:376.84px;font-size:12px;">Ko<u>p</u>ieren</div>
<div class="t" style="left:645px;top:376.84px;font-size:12px;width:100px;text-align:right;">Strg+C</div>
<div class="t" style="left:541px;top:400.84px;font-size:12px;">Ei<u>n</u>fügen</div>
<div class="t" style="left:645px;top:400.84px;font-size:12px;width:100px;text-align:right;">Strg+V</div>
<div class="t" style="left:541px;top:422.84px;font-size:12px;"><u>I</u>nhalte einfügen</div>
<div class="t" style="left:541px;top:453.84px;font-size:12px;">Direkte Formatierung l<u>ö</u>schen</div>
<div class="t" style="left:645px;top:453.84px;font-size:12px;width:100px;text-align:right;">Strg+M</div>
<div class="t" style="left:541px;top:483.84px;font-size:12px;"><u>Z</u>ellen formatieren...</div>
<div class="t" style="left:645px;top:483.84px;font-size:12px;width:100px;text-align:right;">Strg+1</div>
<div class="t" style="left:541px;top:512.84px;font-size:12px;"><u>E</u>infügen...</div>
<div class="t" style="left:645px;top:512.84px;font-size:12px;width:100px;text-align:right;">Strg++</div>
<div class="t" style="left:541px;top:533.84px;font-size:12px;"><u>L</u>öschen...</div>
<div class="t" style="left:645px;top:533.84px;font-size:12px;width:100px;text-align:right;">Strg+-</div>
<div class="t" style="left:541px;top:556.84px;font-size:12px;">Z<u>e</u>llinhalte löschen...</div>
<div class="t" style="left:645px;top:556.84px;font-size:12px;width:100px;text-align:right;">Rück</div>
<div class="t" style="left:541px;top:580.84px;font-size:12px;">Zellen <u>v</u>erbinden</div>
<div class="t" style="left:541px;top:612.84px;font-size:12px;">Kommentar e<u>i</u>nfügen</div>
<div class="t" style="left:645px;top:612.84px;font-size:12px;width:100px;text-align:right;">Strg+Alt+C</div>
<div style="left:534px;top:442px;width:222px;height:1px;background:#d7d7d7"></div>
<div style="left:534px;top:474px;width:222px;height:1px;background:#d7d7d7"></div>
<div style="left:534px;top:503px;width:222px;height:1px;background:#d7d7d7"></div>
<div style="left:534px;top:601px;width:222px;height:1px;background:#d7d7d7"></div>
<svg style="position:absolute;left:748px;top:425px;" width="6" height="8" viewBox="0 0 6 8"><path d="M1 0L5 4L1 8z" fill="#000"/></svg>
<svg style="position:absolute;left:509px;top:349px;" width="19" height="18" viewBox="0 0 19 18"><path d="M6 12L14 1M13 12L5 1" stroke="#999" stroke-width="1.3"/><circle cx="5" cy="13.5" r="3.2" fill="#d22" /><circle cx="14" cy="13.5" r="3.2" fill="#d22"/><circle cx="5" cy="13.5" r="1" fill="#fff"/><circle cx="14" cy="13.5" r="1" fill="#fff"/></svg>
<svg style="position:absolute;left:510px;top:373px;" width="18" height="18" viewBox="0 0 18 18"><rect x="1.5" y="1.5" width="10" height="11" fill="#fff" stroke="#777"/><rect x="6.5" y="6.5" width="10" height="10" fill="#fff" stroke="#777"/><path d="M3 4h6M3 6h6M8 10h6M8 12h6" stroke="#999"/></svg>
<svg style="position:absolute;left:510px;top:397px;" width="18" height="18" viewBox="0 0 18 18"><rect x="1.5" y="3.5" width="13" height="13.5" rx="1" fill="#e8b060" stroke="#a87020"/><rect x="5.5" y="1.5" width="5" height="3" fill="#ddd" stroke="#777"/><rect x="7.5" y="7.5" width="9" height="9.5" fill="#fff" stroke="#777"/><path d="M9 10h6M9 12h6M9 14h5" stroke="#999"/></svg>
<svg style="position:absolute;left:512px;top:451px;" width="18" height="18" viewBox="0 0 18 18"><path d="M5 3h8M9 3L6 15M2 15h7" stroke="#555" stroke-width="1.4"/><path d="M10 11l5 5M15 11l-5 5" stroke="#e04050" stroke-width="1.3"/></svg>
<svg style="position:absolute;left:510px;top:553px;" width="18" height="18" viewBox="0 0 18 18"><circle cx="9" cy="9" r="7.5" fill="#fff" stroke="#d42020" stroke-width="2"/><path d="M6 6l6 6M12 6l-6 6" stroke="#d42020" stroke-width="1.8"/></svg>
<svg style="position:absolute;left:510px;top:577px;" width="18" height="18" viewBox="0 0 18 18"><rect x="1.5" y="2.5" width="15" height="13" fill="#fff" stroke="#6a7a9a"/><path d="M1.5 6.5h15M1.5 11.5h15M6.5 2.5v4M11.5 2.5v4M6.5 11.5v4M11.5 11.5v4" stroke="#6a7a9a"/><rect x="2" y="7" width="14" height="4" fill="#c8d8f0"/><path d="M4 9h10M4 9l2-1.5M4 9l2 1.5M14 9l-2-1.5M14 9l-2 1.5" stroke="#2a5ab0"/></svg>
<svg style="position:absolute;left:510px;top:609px;" width="18" height="18" viewBox="0 0 18 18"><path d="M1.5 1.5h15v10l-5 5h-10z" fill="#f8e860" stroke="#c0a820"/><path d="M11.5 16.5v-5h5" fill="#e8d040" stroke="#c0a820"/></svg>
<svg style="position:absolute;left:15px;top:1051px;" width="18" height="18" viewBox="0 0 18 18"><path d="M1 2.7L6.8 2V7.8H1zM8 1.8L17 .5V7.8H8zM1 9H6.8V14.8L1 14.2zM8 9H17V17L8 15.8z" fill="#fff"/></svg>
<div style="left:48px;top:1040px;width:344px;height:1px;background:#c4c4c4"></div>
<svg style="position:absolute;left:56px;top:1050px;" width="24" height="21" viewBox="0 0 24 21"><circle cx="12" cy="10" r="8.6" fill="none" stroke="#111" stroke-width="2.8"/></svg>
<div class="t" style="left:88px;top:1053.30px;font-size:15px;color:#2a2a2a">Zur Suche Text hier eingeben</div>
<svg style="position:absolute;left:365px;top:1051px;" width="13" height="18" viewBox="0 0 13 18"><rect x="3.5" y="0.8" width="6" height="11" rx="3" fill="none" stroke="#333" stroke-width="1.2"/><path d="M1 8q0 6 5.5 6q5.5 0 5.5-6M6.5 14v3M3 17h7" fill="none" stroke="#333" stroke-width="1.2"/></svg>
<svg style="position:absolute;left:406px;top:1051px;" width="19" height="17" viewBox="0 0 19 17"><rect x="1.5" y="4" width="10" height="8" fill="none" stroke="#fff" stroke-width="1.3"/><path d="M0 1.5h13M0 15h13M15.5 1v3M15.5 6v5M15.5 13v3" stroke="#fff" stroke-width="1.3"/><rect x="14" y="4" width="3" height="3" fill="#fff"/></svg>
<svg style="position:absolute;left:454px;top:1047px;" width="25" height="25" viewBox="0 0 25 25"><defs><radialGradient id="ffg" cx=".6" cy=".3" r=".8"><stop offset="0" stop-color="#ffe040"/><stop offset=".5" stop-color="#ff8a20"/><stop offset="1" stop-color="#e02050"/></radialGradient></defs><circle cx="12" cy="12.5" r="11" fill="url(#ffg)"/><circle cx="13" cy="11.5" r="5.5" fill="#5a30b0"/><path d="M6 6q4 2 6 6q1-4 5-5q-2 6-8 9" fill="#ff9a30"/></svg>
<svg style="position:absolute;left:504px;top:1048px;" width="24" height="22" viewBox="0 0 24 22"><path d="M1 3h7l2 2h12v15h-21z" fill="#f8d060"/><path d="M1 7h21v13h-21z" fill="#fce8a0"/><path d="M7 13h10v7h-3v-3h-4v3h-3z" fill="#2aa0e0"/></svg>
<svg style="position:absolute;left:551px;top:1047px;" width="27" height="25" viewBox="0 0 27 25"><circle cx="13.5" cy="12.5" r="11.5" fill="#1a5ab0"/><circle cx="13.5" cy="12" r="9" fill="#3a8ae0"/><path d="M3 12l10 3l11-5v9q-5 4-11 3q-7-2-10-10z" fill="#f0f0f0"/><path d="M4 10q8 5 20-2" fill="none" stroke="#bbb"/></svg>
<svg style="position:absolute;left:602px;top:1049px;" width="23" height="23" viewBox="0 0 23 23"><path d="M2 13q0-11 11-11q9 0 9 9v2h-14q0 5 6 5q4 0 7-2v4q-3 2-8 2q-11 0-11-9zM8 9h9q0-3-4.5-3q-4 0-4.5 3z" fill="#1a7ad8"/></svg>
<div style="left:639px;top:1040px;width:48px;height:40px;background:#3b3f3f"></div>
<svg style="position:absolute;left:652px;top:1048px;" width="22" height="24" viewBox="0 0 22 24"><path d="M1 1h13l6 6v16h-19z" fill="#fff" stroke="#2e9a2e" stroke-width="1.6"/><path d="M14 0h7v7z" fill="#2e9a2e"/><rect x="4" y="9" width="13" height="10" fill="#1f8a22"/><path d="M4 12.3h13M4 15.6h13M8.3 9v10M12.6 9v10" stroke="#e8f8e8" stroke-width=".9"/><rect x="12" y="14" width="4" height="5" fill="#e06030"/></svg>
<div style="left:447px;top:1078px;width:40px;height:2px;background:#76b9ed"></div>
<div style="left:496px;top:1078px;width:40px;height:2px;background:#76b9ed"></div>
<div style="left:545px;top:1078px;width:40px;height:2px;background:#76b9ed"></div>
<div style="left:594px;top:1078px;width:40px;height:2px;background:#76b9ed"></div>
<div style="left:639px;top:1078px;width:48px;height:2px;background:#76b9ed"></div>
<svg style="position:absolute;left:1650px;top:1055px;" width="14" height="9" viewBox="0 0 14 9"><path d="M1 8L7 2L13 8" fill="none" stroke="#fff" stroke-width="1.3"/></svg>
<svg style="position:absolute;left:1672px;top:1051px;" width="18" height="18" viewBox="0 0 18 18"><circle cx="8" cy="8" r="7.5" fill="#1a6ac8"/><circle cx="8" cy="8" r="4" fill="#30a0e8"/><circle cx="7" cy="8" r="2" fill="#111"/><circle cx="12.5" cy="13" r="4" fill="#5ac040"/><path d="M10.5 13l1.5 1.5l2.5-3" stroke="#fff" fill="none" stroke-width="1.1"/></svg>
<svg style="position:absolute;left:1696px;top:1053px;" width="18" height="13" viewBox="0 0 18 13"><path d="M2 1v3M5 1v3M1 4h5v3q0 2-2.5 2q-2.5 0-2.5-2zM3.5 9v3" fill="none" stroke="#fff" stroke-width="1.1"/><rect x="7" y="4" width="9" height="7" fill="#eee"/><rect x="16" y="6" width="1.5" height="3" fill="#fff"/></svg>
<svg style="position:absolute;left:1720px;top:1053px;" width="18" height="15" viewBox="0 0 18 15"><rect x="4.5" y="1.5" width="12" height="9" fill="none" stroke="#fff" stroke-width="1.1"/><path d="M10.5 11v2.5M7 13.5h7" stroke="#fff" stroke-width="1.1"/><rect x="1" y="1" width="4" height="4" fill="#1b1f1f" stroke="#fff" stroke-width="1"/><path d="M3 5v9" stroke="#fff"/></svg>
<svg style="position:absolute;left:1744px;top:1052px;" width="18" height="16" viewBox="0 0 18 16"><path d="M1 5.5h3.5l4.5-4v13l-4.5-4h-3.5z" fill="none" stroke="#fff" stroke-width="1.1"/><path d="M11 5q2 3 0 6M13 3q3.5 5 0 10M15 1q5 7 0 14" fill="none" stroke="#fff" stroke-width="1.1"/></svg>
<div class="t" style="left:1772px;top:1053.84px;font-size:12px;color:#fff">DEU</div>
<div class="t" style="left:1807px;top:1044.84px;font-size:12px;width:54px;text-align:center;color:#fff">17:37</div>
<div class="t" style="left:1804px;top:1061.84px;font-size:12px;width:60px;text-align:center;color:#fff">20.02.2019</div>
<svg style="position:absolute;left:1878px;top:1052px;" width="18" height="17" viewBox="0 0 18 17"><path d="M1 1h16v11h-6l-2 3l-2-3h-6z" fill="none" stroke="#fff" stroke-width="1.2"/></svg>
<div style="left:1915px;top:1040px;width:1px;height:40px;background:#555"></div>
<svg style="position:absolute;left:785px;top:986px;" width="23" height="24" viewBox="0 0 23 24"><path d="M13 14l7 7" stroke="#333" stroke-width="3.2" stroke-linecap="round"/><circle cx="8.5" cy="9.5" r="7" fill="#fff" fill-opacity=".6" stroke="#3a54b0" stroke-width="2.6"/><path d="M5 20L19 5" stroke="#c06010" stroke-width="3.6"/><path d="M5 20L19 5" stroke="#f0a040" stroke-width="2"/><path d="M18 3l3 3" stroke="#e03030" stroke-width="2.4"/></svg>
<svg style="position:absolute;left:1322px;top:1024px;" width="15" height="12" viewBox="0 0 15 12"><rect x="1" y="2" width="10" height="7" fill="#777"/><path d="M12.5 1v10M11 1h3M11 11h3" stroke="#777"/></svg>
<svg style="position:absolute;left:1353px;top:1023px;" width="14" height="15" viewBox="0 0 14 15"><path d="M8.5 1.5h-7v10.5h7v-2" fill="none" stroke="#8a8a8a" stroke-width="1.1"/><path d="M4 7l2 2l4.5-4.5" fill="none" stroke="#8a8a8a" stroke-width="1"/></svg>
</body></html>
